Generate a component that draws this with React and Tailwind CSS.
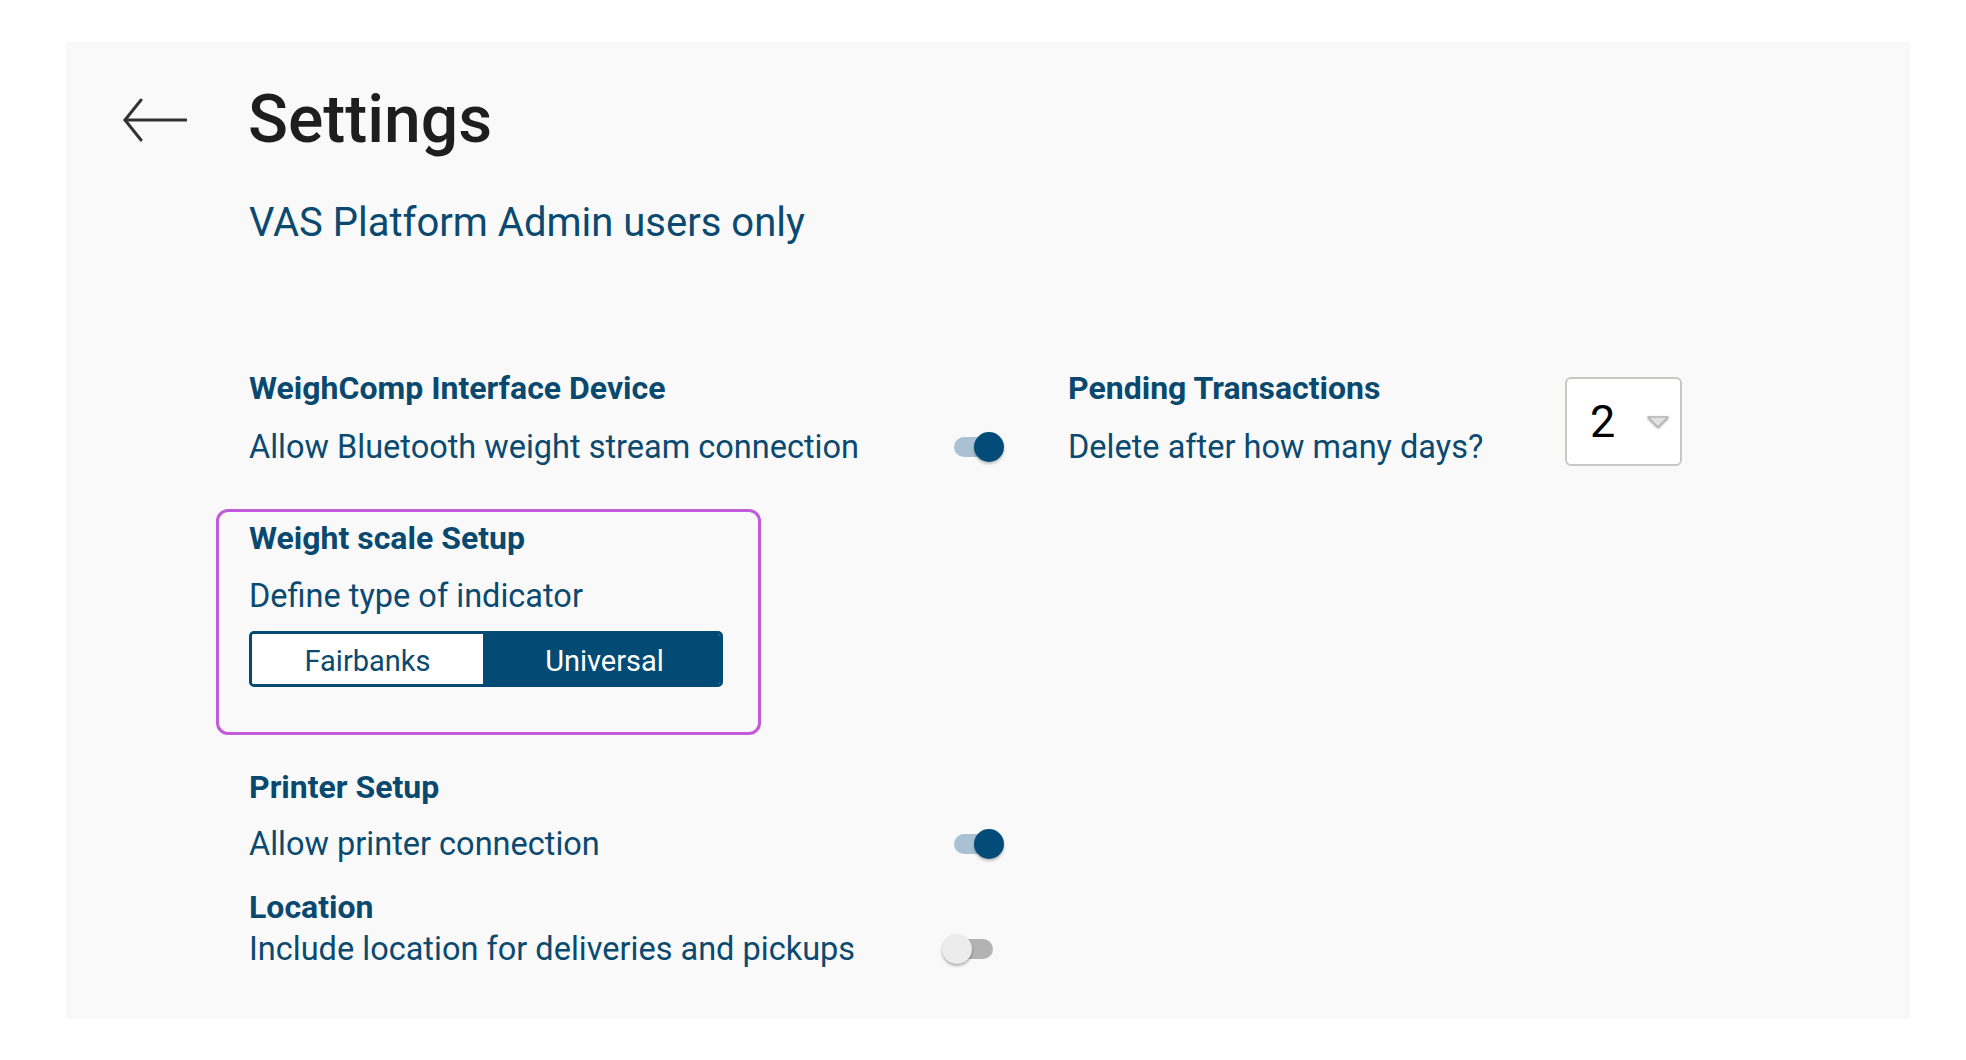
function Toggle({ on }) {
  if (on) {
    return (
      <div className="relative w-[50px] h-[30px] shrink-0">
        <div className="absolute left-0 top-[5px] w-[44px] h-[20px] rounded-full bg-[#a9c1d3]" />
        <div className="absolute right-0 top-0 w-[30px] h-[30px] rounded-full bg-[#034b78] shadow-[0_2px_3px_rgba(0,0,0,0.25)]" />
      </div>
    );
  }
  return (
    <div className="relative w-[51px] h-[30px] shrink-0">
      <div className="absolute right-0 top-[5px] w-[44px] h-[20px] rounded-full bg-[#b3b3b3]" />
      <div className="absolute left-0 top-0 w-[30px] h-[30px] rounded-full bg-[#ececec] shadow-[0_2px_3px_rgba(0,0,0,0.3)]" />
    </div>
  );
}

function Heading({ children }) {
  return (
    <div className="text-[32px] leading-[36px] font-bold text-[#0a496f]">{children}</div>
  );
}

function Body({ children }) {
  return <div className="text-[32.5px] leading-[40px] text-[#0b4a70]">{children}</div>;
}

export default function App() {
  return (
    <div className="w-full h-[1060px] bg-white pt-[42px] pl-[66px] font-[Roboto,sans-serif]">
      <div className="w-[1844px] h-[977px] bg-[#f9f9f9] pt-[45px]">
        {/* Header */}
        <div className="flex items-center">
          <div className="ml-[57px] w-[64px] h-[44px] flex items-center">
            <svg width="64" height="44" viewBox="0 0 64 44" fill="none">
              <path d="M2 22 H63" stroke="#333" strokeWidth="3" strokeLinecap="round" />
              <path d="M18 2 L2 22 L18 42" stroke="#333" strokeWidth="3" strokeLinecap="round" strokeLinejoin="round" />
            </svg>
          </div>
          <div className="ml-[61px] text-[66px] leading-[66px] font-medium text-[#1e1e1e]">Settings</div>
        </div>

        <div className="ml-[183px]">
          <div className="mt-[46px] text-[40px] leading-[48px] text-[#0b4a70]">VAS Platform Admin users only</div>

          {/* Row 1 */}
          <div className="mt-[123px] flex">
            <div className="w-[819px]">
              <Heading>WeighComp Interface Device</Heading>
              <div className="mt-[21px] w-[755px] flex items-center justify-between">
                <Body>Allow Bluetooth weight stream connection</Body>
                <Toggle on />
              </div>
            </div>
            <div className="flex">
              <div className="w-[497px]">
                <Heading>Pending Transactions</Heading>
                <div className="mt-[21px]">
                  <Body>Delete after how many days?</Body>
                </div>
              </div>
              <div className="mt-[7px] w-[117px] h-[89px] bg-white border-2 border-[#c8c8c2] rounded-[6px] flex items-center">
                <span className="ml-[23px] text-[45px] leading-none text-black">2</span>
                <svg className="ml-[31px] drop-shadow-[0_1px_1px_rgba(0,0,0,0.35)]" width="24" height="14" viewBox="0 0 24 14">
                  <polygon points="2,2 22,2 12,12" fill="#e2e2e2" stroke="#b5b5b5" strokeWidth="1.5" strokeLinejoin="round" />
                </svg>
              </div>
            </div>
          </div>

          {/* Weight scale setup box */}
          <div className="mt-[42px] -ml-[33px] w-[545px] border-[3px] border-[#c25bd9] rounded-[12px] pt-[8px] pl-[30px] pb-[45px]">
            <Heading>Weight scale Setup</Heading>
            <div className="mt-[20px]">
              <Body>Define type of indicator</Body>
            </div>
            <div className="mt-[15px] flex w-[474px] h-[56px] border-[3px] border-[#034b74] rounded-[5px] overflow-hidden text-[29px] leading-[29px]">
              <div className="w-[231px] bg-white flex items-center justify-center pt-[5px] text-[#0b4a70]">Fairbanks</div>
              <div className="flex-1 bg-[#034b74] flex items-center justify-center pt-[5px] pl-[6px] text-white">Universal</div>
            </div>
          </div>

          {/* Printer */}
          <div className="mt-[34px]">
            <Heading>Printer Setup</Heading>
          </div>
          <div className="mt-[19px] w-[755px] flex items-center justify-between">
            <Body>Allow printer connection</Body>
            <Toggle on />
          </div>

          {/* Location */}
          <div className="mt-[25px]">
            <Heading>Location</Heading>
          </div>
          <div className="mt-[4px] w-[744px] flex items-center justify-between">
            <Body>Include location for deliveries and pickups</Body>
            <Toggle />
          </div>
        </div>
      </div>
    </div>
  );
}
